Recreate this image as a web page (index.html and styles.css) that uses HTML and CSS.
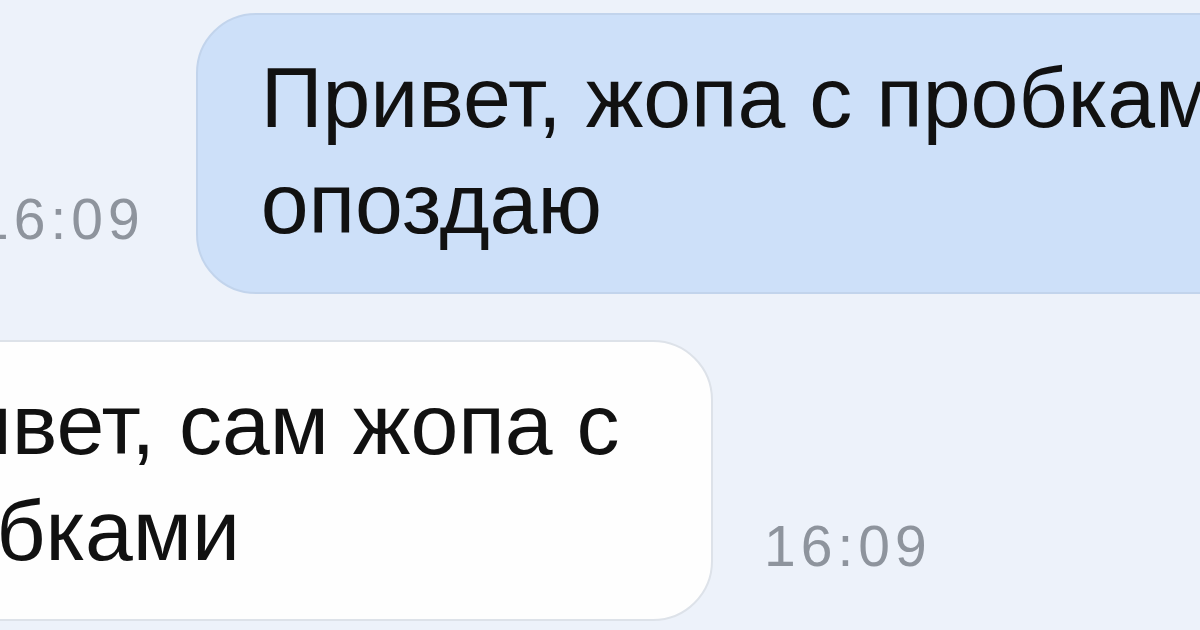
FILE: index.html
```html
<!DOCTYPE html>
<html lang="ru">
<head>
    <meta charset="UTF-8">
    <meta name="viewport" content="width=device-width, initial-scale=1.0">
    <title>Диалог</title>
    <link rel="stylesheet" href="styles.css">
</head>
<body>
    <div class="chat">
        <div class="row row-out">
            <span class="time">16:09</span>
            <div class="bubble bubble-out">Привет, жопа с пробками, опоздаю</div>
        </div>
        <div class="row row-in">
            <div class="bubble bubble-in">Привет, сам жопа с пробками</div>
            <span class="time">16:09</span>
        </div>
    </div>
</body>
</html>
```

FILE: styles.css
```css
html, body {
    margin: 0;
    padding: 0;
    height: 100%;
    overflow: hidden;
}
body {
    font-family: "Liberation Sans", Arial, sans-serif;
    background-color: #edf2fa;
    color: #111;
}
.chat {
    display: flex;
    flex-direction: column;
    gap: 46px;
    padding-top: 13px;
}
.row {
    display: flex;
    align-items: flex-end;
    gap: 51px;
}
.row-out {
    margin-left: -23px;
}
.row-in {
    margin-left: -211px;
}
.bubble {
    flex-shrink: 0;
    box-sizing: border-box;
    font-size: 86px;
    line-height: 106px;
    padding: 29px 63px 36px;
    border-radius: 60px;
}
.bubble-out {
    width: 1200px;
    background-color: #cde0f9;
    border: 2px solid #c2d4ec;
}
.bubble-in {
    width: 924px;
    padding-right: 40px;
    background-color: #fefefe;
    border: 2px solid #dde2e9;
}
.time {
    flex-shrink: 0;
    font-size: 57px;
    line-height: 57px;
    letter-spacing: 5px;
    color: #8e949d;
    margin-bottom: 46px;
}
```
